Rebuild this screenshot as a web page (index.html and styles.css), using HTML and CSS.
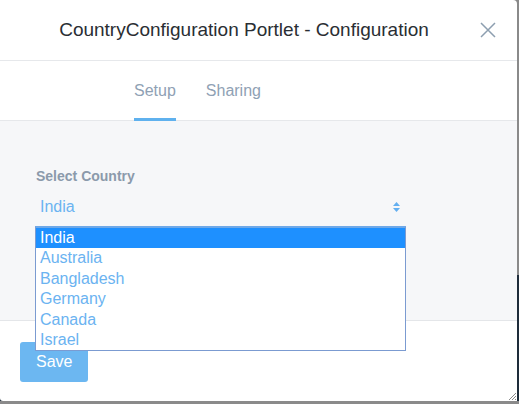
FILE: index.html
```html
<!DOCTYPE html>
<html lang="en">
<head>
  <meta charset="UTF-8" />
  <meta name="viewport" content="width=device-width, initial-scale=1.0"/>
  <title>CountryConfiguration Portlet - Configuration</title>
  <link rel="stylesheet" href="styles.css">
</head>
<body>
  <div class="modal">
    <div class="modal-header">
      <h1 class="modal-title">CountryConfiguration Portlet - Configuration</h1>
      <button class="close" title="Close">
        <svg width="16" height="16" viewBox="0 0 16 16">
          <path d="M1 1 L15 15 M15 1 L1 15" stroke="#8d9fb0" stroke-width="1.5" fill="none"/>
        </svg>
      </button>
    </div>

    <div class="tabs">
      <a href="#" class="tab current">Setup</a>
      <a href="#" class="tab">Sharing</a>
    </div>

    <div class="modal-body">
      <label class="field-label">Select Country</label>
      <div class="select-wrap">
        <div class="select-box">
          <span>India</span>
          <svg class="select-arrow" width="7" height="10" viewBox="0 0 7 10">
            <path d="M3.5 0 L7 4 L0 4 Z M0 6 L7 6 L3.5 10 Z" fill="#63aff0"/>
          </svg>
        </div>
        <ul class="options">
          <li class="selected">India</li>
          <li>Australia</li>
          <li>Bangladesh</li>
          <li>Germany</li>
          <li>Canada</li>
          <li>Israel</li>
        </ul>
      </div>
    </div>

    <div class="modal-footer">
      <button class="btn-save">Save</button>
    </div>

    <svg class="grip" width="8" height="8" viewBox="0 0 8 8">
      <path d="M8 1 L1 8 M8 4 L4 8 M8 7 L7 8" stroke="#8a8a8a" stroke-width="1"/>
    </svg>
  </div>
</body>
</html>
```

FILE: styles.css
```css
* {
  box-sizing: border-box;
  margin: 0;
  padding: 0;
}

body {
  width: 519px;
  height: 404px;
  overflow: hidden;
  font-family: 'Liberation Sans', Arial, sans-serif;
  background: linear-gradient(to bottom, #8a8a8a 0, #8a8a8a 275px, #1e2c3a 275px, #1e2c3a 401px, #8a8a8a 401px);
}

.modal {
  position: relative;
  width: 517px;
  height: 401px;
  background: #fff;
  border-top-right-radius: 4px;
  border-bottom-left-radius: 3px;
  display: flex;
  flex-direction: column;
}

.modal-header {
  flex-shrink: 0;
  height: 61px;
  display: flex;
  align-items: center;
  padding: 0 13px 0 16px;
  border-bottom: 1px solid #e6e8eb;
}

.modal-title {
  flex: 1;
  text-align: center;
  font-size: 19px;
  font-weight: 400;
  color: #2a2e33;
}

.close {
  width: 32px;
  height: 32px;
  border: none;
  background: none;
  display: flex;
  align-items: center;
  justify-content: center;
}

.tabs {
  flex-shrink: 0;
  height: 60px;
  display: flex;
  gap: 30px;
  padding-left: 134px;
  border-bottom: 1px solid #e6e8eb;
}

.tab {
  height: 60px;
  margin-bottom: -1px;
  padding-top: 2px;
  display: flex;
  align-items: center;
  font-size: 16px;
  line-height: 20px;
  color: #8fa1b4;
  text-decoration: none;
  border-bottom: 3px solid transparent;
}

.tab.current {
  border-bottom-color: #5fb1ee;
}

.modal-body {
  flex-shrink: 0;
  height: 199px;
  background: #f6f7f9;
  padding: 47px 36px 0;
}

.field-label {
  display: block;
  font-size: 14px;
  line-height: 16px;
  font-weight: 700;
  color: #8b9aab;
  margin-bottom: 10px;
}

.select-wrap {
  position: relative;
  width: 368px;
}

.select-box {
  height: 26px;
  display: flex;
  align-items: center;
  justify-content: space-between;
  padding: 0 4px;
  font-size: 16px;
  line-height: 20px;
  color: #6bb3f1;
}

.options {
  position: absolute;
  top: calc(100% + 6px);
  left: -1px;
  width: 371px;
  list-style: none;
  background: #fff;
  border: 1px solid #7b9bd1;
  border-top: 2px solid #6ea8e8;
  z-index: 5;
}

.options li {
  padding: 1px 0 1px 4px;
  font-size: 16px;
  line-height: 18.4px;
  color: #6bb3f1;
}

.options li.selected {
  background: #1e90ff;
  color: #fff;
}

.modal-footer {
  flex: 1;
  min-height: 0;
  border-top: 1px solid #e4e6e9;
  padding: 21px 20px 0;
}

.btn-save {
  width: 68px;
  height: 40px;
  border: none;
  border-radius: 3px;
  background: #6cb7f1;
  color: #fff;
  font-family: 'Liberation Sans', Arial, sans-serif;
  font-size: 16px;
  text-align: left;
  padding-left: 16px;
}

.grip {
  position: absolute;
  right: 1px;
  bottom: 1px;
}
```
